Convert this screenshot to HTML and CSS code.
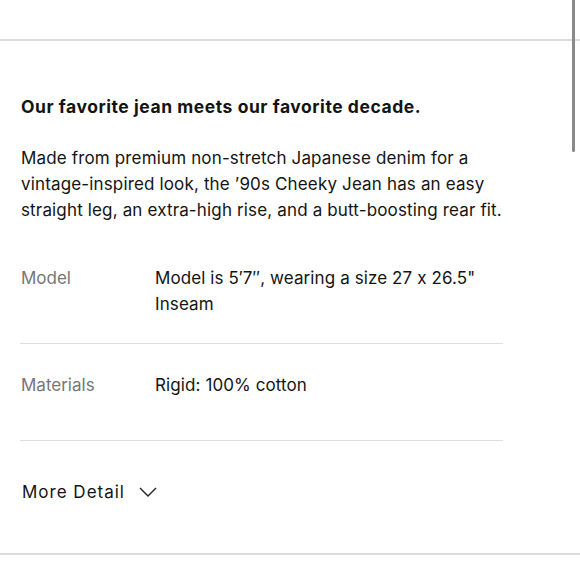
FILE: index.html
```html
<!DOCTYPE html>
<html>
<head>
<meta charset="utf-8">
<link rel="stylesheet" href="styles.css">
</head>
<body>
<div class="scrollbar"></div>
<main class="panel">
  <section class="intro">
    <h2 class="title">Our favorite jean meets our favorite decade.</h2>
    <p class="desc">Made from premium non-stretch Japanese denim for a vintage-inspired look, the ’90s Cheeky Jean has an easy straight leg, an extra-high rise, and a butt-boosting rear fit.</p>
  </section>
  <dl class="specs">
    <div class="spec">
      <dt class="label">Model</dt>
      <dd class="value">Model is 5′7″, wearing a size 27 x 26.5" Inseam</dd>
    </div>
    <div class="spec">
      <dt class="label">Materials</dt>
      <dd class="value">Rigid: 100% cotton</dd>
    </div>
  </dl>
  <button class="more">More Detail
    <svg class="chev" width="18" height="10" viewBox="0 0 18 10"><path d="M1 1 L9 9 L17 1" fill="none" stroke="#222" stroke-width="1.4"/></svg>
  </button>
</main>
</body>
</html>
```
FILE: styles.css
```css
html, body { margin: 0; padding: 0; background: #fff; }
body {
  font-family: "Inter", "Liberation Sans", sans-serif; color: #141414;
  font-feature-settings: "calt" 0;
}
.scrollbar {
  position: absolute; top: 0; left: 572px; width: 3px; height: 152px;
  background: #8a8a8a; border-radius: 0 0 2px 2px; z-index: 2;
}
.panel {
  margin-top: 39px;
  border-top: 2px solid #dcdcdc;
  border-bottom: 2px solid #dcdcdc;
}
.intro { padding: 54px 0 0 21px; width: 505px; }
.title { margin: 0; font-size: 17.5px; font-weight: 700; line-height: 24px; letter-spacing: 0.55px; }
.desc { margin: 26px 0 0; font-size: 17px; line-height: 26px; letter-spacing: 0.15px; }
.specs { margin: 14px 0 0 20px; padding: 0; width: 483px; }
.spec { display: flex; padding: 28px 0 26px; border-bottom: 1px solid #dedede; }
.label { width: 134px; margin: 0; padding-left: 1px; font-size: 17px; line-height: 26px; color: #767676; }
.value { margin: 0; flex: 1; min-height: 42px; font-size: 17px; line-height: 26px; letter-spacing: 0.1px; }
.more {
  display: flex; align-items: center; gap: 14px;
  margin: 38px 0 48px 22px; padding: 0; border: 0; background: none;
  font-family: inherit; font-size: 17px; line-height: 26px; color: #141414;
  letter-spacing: 1px;
}
.chev { display: block; }
```
